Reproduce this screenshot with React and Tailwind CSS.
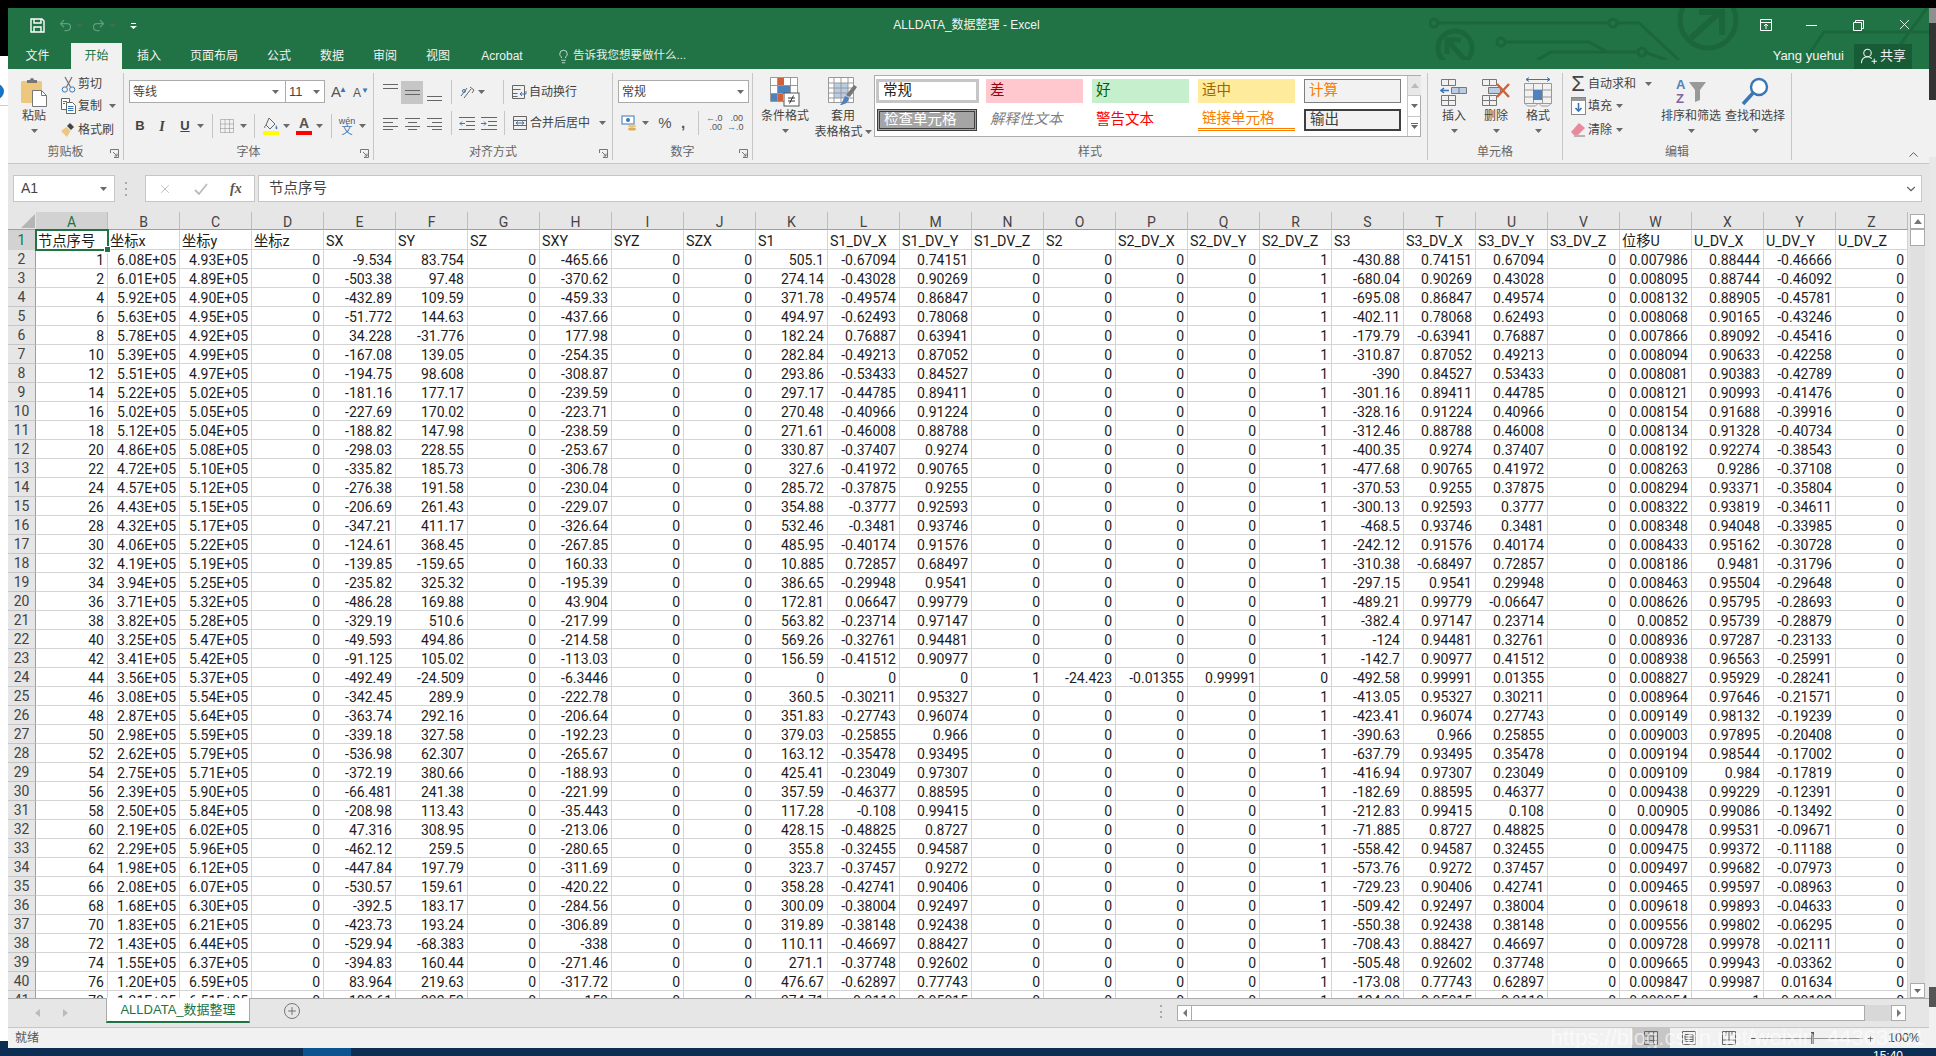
import { Undo2, Redo2, Lightbulb, ChevronUp, ChevronDown, UserRoundPlus, X, Plus } from 'lucide-react'

const raw = `1 6.08E+05 4.93E+05 -9.534 83.754 -465.66 505.1 -0.67094 0.74151 -430.88 0.74151 0.67094 0.007986 0.88444 -0.46666
2 6.01E+05 4.89E+05 -503.38 97.48 -370.62 274.14 -0.43028 0.90269 -680.04 0.90269 0.43028 0.008095 0.88744 -0.46092
4 5.92E+05 4.90E+05 -432.89 109.59 -459.33 371.78 -0.49574 0.86847 -695.08 0.86847 0.49574 0.008132 0.88905 -0.45781
6 5.63E+05 4.95E+05 -51.772 144.63 -437.66 494.97 -0.62493 0.78068 -402.11 0.78068 0.62493 0.008068 0.90165 -0.43246
8 5.78E+05 4.92E+05 34.228 -31.776 177.98 182.24 0.76887 0.63941 -179.79 -0.63941 0.76887 0.007866 0.89092 -0.45416
10 5.39E+05 4.99E+05 -167.08 139.05 -254.35 282.84 -0.49213 0.87052 -310.87 0.87052 0.49213 0.008094 0.90633 -0.42258
12 5.51E+05 4.97E+05 -194.75 98.608 -308.87 293.86 -0.53433 0.84527 -390 0.84527 0.53433 0.008081 0.90383 -0.42789
14 5.22E+05 5.02E+05 -181.16 177.17 -239.59 297.17 -0.44785 0.89411 -301.16 0.89411 0.44785 0.008121 0.90993 -0.41476
16 5.02E+05 5.05E+05 -227.69 170.02 -223.71 270.48 -0.40966 0.91224 -328.16 0.91224 0.40966 0.008154 0.91688 -0.39916
18 5.12E+05 5.04E+05 -188.82 147.98 -238.59 271.61 -0.46008 0.88788 -312.46 0.88788 0.46008 0.008134 0.91328 -0.40734
20 4.86E+05 5.08E+05 -298.03 228.55 -253.67 330.87 -0.37407 0.9274 -400.35 0.9274 0.37407 0.008192 0.92274 -0.38543
22 4.72E+05 5.10E+05 -335.82 185.73 -306.78 327.6 -0.41972 0.90765 -477.68 0.90765 0.41972 0.008263 0.9286 -0.37108
24 4.57E+05 5.12E+05 -276.38 191.58 -230.04 285.72 -0.37875 0.9255 -370.53 0.9255 0.37875 0.008294 0.93371 -0.35804
26 4.43E+05 5.15E+05 -206.69 261.43 -229.07 354.88 -0.3777 0.92593 -300.13 0.92593 0.3777 0.008322 0.93819 -0.34611
28 4.32E+05 5.17E+05 -347.21 411.17 -326.64 532.46 -0.3481 0.93746 -468.5 0.93746 0.3481 0.008348 0.94048 -0.33985
30 4.06E+05 5.22E+05 -124.61 368.45 -267.85 485.95 -0.40174 0.91576 -242.12 0.91576 0.40174 0.008433 0.95162 -0.30728
32 4.19E+05 5.19E+05 -139.85 -159.65 160.33 10.885 0.72857 0.68497 -310.38 -0.68497 0.72857 0.008186 0.9481 -0.31796
34 3.94E+05 5.25E+05 -235.82 325.32 -195.39 386.65 -0.29948 0.9541 -297.15 0.9541 0.29948 0.008463 0.95504 -0.29648
36 3.71E+05 5.32E+05 -486.28 169.88 43.904 172.81 0.06647 0.99779 -489.21 0.99779 -0.06647 0.008626 0.95795 -0.28693
38 3.82E+05 5.28E+05 -329.19 510.6 -217.99 563.82 -0.23714 0.97147 -382.4 0.97147 0.23714 0.00852 0.95739 -0.28879
40 3.25E+05 5.47E+05 -49.593 494.86 -214.58 569.26 -0.32761 0.94481 -124 0.94481 0.32761 0.008936 0.97287 -0.23133
42 3.41E+05 5.42E+05 -91.125 105.02 -113.03 156.59 -0.41512 0.90977 -142.7 0.90977 0.41512 0.008938 0.96563 -0.25991
44 3.56E+05 5.37E+05 -492.49 -24.509 -6.3446 0 0 0 -492.58 0.99991 0.01355 0.008827 0.95929 -0.28241
46 3.08E+05 5.54E+05 -342.45 289.9 -222.78 360.5 -0.30211 0.95327 -413.05 0.95327 0.30211 0.008964 0.97646 -0.21571
48 2.87E+05 5.64E+05 -363.74 292.16 -206.64 351.83 -0.27743 0.96074 -423.41 0.96074 0.27743 0.009149 0.98132 -0.19239
50 2.98E+05 5.59E+05 -339.18 327.58 -192.23 379.03 -0.25855 0.966 -390.63 0.966 0.25855 0.009003 0.97895 -0.20408
52 2.62E+05 5.79E+05 -536.98 62.307 -265.67 163.12 -0.35478 0.93495 -637.79 0.93495 0.35478 0.009194 0.98544 -0.17002
54 2.75E+05 5.71E+05 -372.19 380.66 -188.93 425.41 -0.23049 0.97307 -416.94 0.97307 0.23049 0.009109 0.984 -0.17819
56 2.39E+05 5.90E+05 -66.481 241.38 -221.99 357.59 -0.46377 0.88595 -182.69 0.88595 0.46377 0.009438 0.99229 -0.12391
58 2.50E+05 5.84E+05 -208.98 113.43 -35.443 117.28 -0.108 0.99415 -212.83 0.99415 0.108 0.00905 0.99086 -0.13492
60 2.19E+05 6.02E+05 47.316 308.95 -213.06 428.15 -0.48825 0.8727 -71.885 0.8727 0.48825 0.009478 0.99531 -0.09671
62 2.29E+05 5.96E+05 -462.12 259.5 -280.65 355.8 -0.32455 0.94587 -558.42 0.94587 0.32455 0.009475 0.99372 -0.11188
64 1.98E+05 6.12E+05 -447.84 197.79 -311.69 323.7 -0.37457 0.9272 -573.76 0.9272 0.37457 0.009497 0.99682 -0.07973
66 2.08E+05 6.07E+05 -530.57 159.61 -420.22 358.28 -0.42741 0.90406 -729.23 0.90406 0.42741 0.009465 0.99597 -0.08963
68 1.68E+05 6.30E+05 -392.5 183.17 -284.56 300.09 -0.38004 0.92497 -509.42 0.92497 0.38004 0.009618 0.99893 -0.04633
70 1.83E+05 6.21E+05 -423.73 193.24 -306.89 319.89 -0.38148 0.92438 -550.38 0.92438 0.38148 0.009556 0.99802 -0.06295
72 1.43E+05 6.44E+05 -529.94 -68.383 -338 110.11 -0.46697 0.88427 -708.43 0.88427 0.46697 0.009728 0.99978 -0.02111
74 1.55E+05 6.37E+05 -394.83 160.44 -271.46 271.1 -0.37748 0.92602 -505.48 0.92602 0.37748 0.009665 0.99943 -0.03362
76 1.20E+05 6.59E+05 83.964 219.63 -317.72 476.67 -0.62897 0.77743 -173.08 0.77743 0.62897 0.009847 0.99987 0.01634
78 1.31E+05 6.51E+05 -102.61 332.53 -150 374.71 -0.3118 0.95015 -124.38 0.95015 0.3118 0.009854 1 0.00192`

const rows = raw.split('\n').map((line, i) => {
  const [a, b, c, e, f, h, k, l, m, s, t, u, w, x, y] = line.split(' ')
  const row = [a, b, c, '0', e, f, '0', h, '0', '0', k, l, m, '0', '0', '0', '0', '1', s, t, u, '0', w, x, y, '0']
  // row 24 is the odd one, S1 is empty and S2 carries the values
  if (i === 22) row.splice(13, 5, '1', '-24.423', '-0.01355', '0.99991', '0')
  return row
})

const letters = 'ABCDEFGHIJKLMNOPQRSTUVWXYZ'.split('')
const heads = ['节点序号', '坐标x', '坐标y', '坐标z', 'SX', 'SY', 'SZ', 'SXY', 'SYZ', 'SZX', 'S1', 'S1_DV_X', 'S1_DV_Y', 'S1_DV_Z', 'S2', 'S2_DV_X', 'S2_DV_Y', 'S2_DV_Z', 'S3', 'S3_DV_X', 'S3_DV_Y', 'S3_DV_Z', '位移U', 'U_DV_X', 'U_DV_Y', 'U_DV_Z']

const Caret = ({ className = '' }) => (
  <svg width="7" height="4" viewBox="0 0 7 4" className={`shrink-0 ${className}`}><path d="M0 0h7L3.5 4z" fill="#6a6a6a" /></svg>
)

const Launcher = () => (
  <svg width="9" height="9" viewBox="0 0 9 9" className="absolute right-[4px] bottom-[2px]" fill="none" stroke="#777">
    <path d="M.5 4V.5H8.5V8.5H4M3 3l4 4M7 4.5V7H4.5" />
  </svg>
)

const Lines = ({ rows: r }) => (
  <svg width="15" height="15" viewBox="0 0 15 15" stroke="#666" className="shrink-0">
    {r.map(([y, x1, x2]) => <path key={y} d={`M${x1} ${y}.5H${x2}`} />)}
  </svg>
)

function Group({ className, label, launcher, children }) {
  return (
    <div className={`relative h-[87px] shrink-0 border-r border-[#c6c6c6] ${className}`}>
      <div className="h-[71px]">{children}</div>
      <div className="h-[16px] text-center text-[12px] leading-[16px] text-[#666]">{label}</div>
      {launcher && <Launcher />}
    </div>
  )
}

function BigBtn({ className, icon, label, label2, caret = true }) {
  return (
    <div className={`flex flex-col items-center ${className}`}>
      <div className="mt-[3px] flex h-[31px] items-center justify-center">{icon}</div>
      <div className="mt-[1px] whitespace-nowrap text-[12px] leading-[16px] text-[#444]">{label}</div>
      {label2 ? (
        <div className="flex items-center whitespace-nowrap text-[12px] leading-[16px] text-[#444]">{label2}<Caret className="ml-[2px]" /></div>
      ) : caret && <Caret className="mt-[5px]" />}
    </div>
  )
}

function SmallRow({ className = '', icon, label, caret }) {
  return (
    <div className={`flex h-[22px] items-center ${className}`}>
      <span className="flex w-[18px] justify-center">{icon}</span>
      <span className="ml-[1px] whitespace-nowrap text-[12px] text-[#444]">{label}</span>
      {caret}
    </div>
  )
}

const Sep = ({ className = '' }) => <div className={`h-[24px] w-px shrink-0 bg-[#c6c6c6] ${className}`} />

function StyleCell({ className, children }) {
  return <div className={`flex items-center overflow-hidden whitespace-nowrap px-[4px] text-[14.5px] ${className}`}>{children}</div>
}

const GalleryBtn = ({ className, children }) => (
  <div className={`flex w-[14px] flex-1 flex-col items-center justify-center border-[#c6c6c6] ${className}`}>{children}</div>
)

function TitleBar() {
  return (
    <div className="relative flex h-[35px] items-center text-white">
      <svg width="15" height="15" viewBox="0 0 15 15" fill="none" stroke="#fff" strokeWidth="1.4" className="ml-[22px]">
        <path d="M1 1h11l2 2v11H1zM4 1v4h7V1M4 14V9h7v5" />
      </svg>
      <Undo2 size={15} className="ml-[13px] text-[#5f9d7e]" />
      <Caret className="ml-[3px] opacity-40" />
      <Redo2 size={15} className="ml-[8px] text-[#5f9d7e]" />
      <Caret className="ml-[3px] opacity-40" />
      <svg width="7" height="7" viewBox="0 0 7 7" className="ml-[14px]" fill="#fff"><path d="M1 1h5v1H1zM0 4h7L3.5 7z" /></svg>
      <div className="absolute inset-x-0 top-[8px] pr-[4px] text-center text-[12px] leading-[18px] text-[#f2f2f2]">ALLDATA_数据整理 - Excel</div>
      <div className="absolute right-[16px] top-[8px] flex items-center gap-[30px]">
        <svg width="16" height="16" viewBox="0 0 16 16" fill="none" stroke="#fff"><path d="M2.5 2.5h11v11h-11zM2.5 5.5h11M8 12V7.5M6 9l2-2 2 2" /></svg>
        <svg width="16" height="16" viewBox="0 0 16 16" fill="none" stroke="#fff"><path d="M2 8.5h11" /></svg>
        <svg width="16" height="16" viewBox="0 0 16 16" fill="none" stroke="#fff"><path d="M3.5 5.5h8v8h-8zM5.5 5V3.5h8v8H12" /></svg>
        <X size={17} strokeWidth={1.2} />
      </div>
    </div>
  )
}

function TabRow() {
  const tabs = [['文件', 'w-[63px] pr-[4px]'], ['开始', 'w-[51px]'], ['插入', 'w-[54px]'], ['页面布局', 'w-[76px]'], ['公式', 'w-[54px]'], ['数据', 'w-[52px]'], ['审阅', 'w-[54px]'], ['视图', 'w-[52px]'], ['Acrobat', 'w-[76px]']]
  return (
    <div className="relative flex h-[26px] items-stretch text-[12px] text-[#f2f2f2]">
      {tabs.map(([t, w]) => (
        <div key={t} className={`flex items-center justify-center ${w} ${t === '开始' ? 'bg-[#f1f1f1] text-[#217346]' : ''}`}>{t}</div>
      ))}
      <div className="ml-[16px] flex items-center text-[#e3efe8]">
        <Lightbulb size={15} strokeWidth={1.3} />
        <span className="ml-[2px] text-[11.5px]">告诉我您想要做什么...</span>
      </div>
      <div className="ml-auto mr-[17px] flex items-center">
        <span className="mr-[10px] text-[13px]">Yang yuehui</span>
        <div className="flex h-[25px] w-[58px] items-center justify-center gap-[2px] bg-[#185c37] text-[13px]">
          <UserRoundPlus size={18} strokeWidth={1.4} />共享
        </div>
      </div>
    </div>
  )
}

function Ribbon() {
  return (
    <div className="flex h-[95px] border-b border-[#c6c6c6] bg-[#f1f1f1] pt-[4px]">
      <Group className="w-[116px]" label="剪贴板" launcher>
        <div className="flex">
          <BigBtn className="ml-[6px] w-[40px]" label="粘贴" icon={
            <svg width="28" height="30" viewBox="0 0 28 30">
              <rect x="1" y="4" width="21" height="22" rx="1.5" fill="#eec77f" />
              <path d="M7 6V3h3a2 2 0 0 1 4 0h3v3z" fill="#777" />
              <path d="M12.5 13.5h9l5 5v11h-14z" fill="#fff" stroke="#777" />
              <path d="M21.5 13.5v5h5" fill="none" stroke="#777" />
            </svg>
          } />
          <div className="ml-[5px]">
            <SmallRow label="剪切" icon={
              <svg width="15" height="17" viewBox="0 0 15 17" fill="none">
                <path d="M4 1l5.5 10M11 1L5.5 11" stroke="#777" strokeWidth="1.3" />
                <circle cx="3.8" cy="13.5" r="2.6" stroke="#3a76b5" />
                <circle cx="11.2" cy="13.5" r="2.6" stroke="#3a76b5" />
              </svg>
            } />
            <SmallRow label="复制" caret={<Caret className="ml-[7px]" />} icon={
              <svg width="15" height="16" viewBox="0 0 15 16" fill="#fff" stroke="#666">
                <path d="M.5.5h8v11h-8z" /><path d="M5.5 4.5h6l3 3v8h-9z" />
                <path d="M7 8.5h5.5M7 10.5h5.5M7 12.5h5.5M2 3.5h4M2 5.5h2" fill="none" stroke="#3a76b5" />
              </svg>
            } />
            <SmallRow className="mt-[2px]" label="格式刷" icon={
              <svg width="17" height="16" viewBox="0 0 17 16">
                <path d="M10 1l4 4-3 3-4-4z" fill="#444" />
                <path d="M6.5 5l4 4-3.5 6L1 9z" fill="#eec77f" />
              </svg>
            } />
          </div>
        </div>
      </Group>

      <Group className="w-[250px]" label="字体" launcher>
        <div className="ml-[5px] flex pt-[7px]">
          <div className="flex h-[23px] w-[157px] items-center justify-between border border-[#ababab] bg-white pl-[3px] pr-[6px] text-[12px] text-[#444]">等线<Caret /></div>
          <div className="-ml-px flex h-[23px] w-[40px] items-center justify-between border border-[#ababab] bg-white pl-[3px] pr-[4px] text-[13px] text-[#444]">11<Caret /></div>
          <div className="relative ml-[6px] w-[16px] text-[15px] leading-[23px] text-[#555]">A<span className="absolute right-0 top-[-2px] text-[8px] text-[#3a76b5]">▲</span></div>
          <div className="relative ml-[6px] w-[16px] text-[12px] leading-[26px] text-[#555]">A<span className="absolute right-0 top-[-2px] text-[8px] text-[#3a76b5]">▼</span></div>
        </div>
        <div className="mt-[8px] flex h-[24px] items-center text-[#444]">
          <span className="ml-[11px] w-[10px] text-center text-[13px] font-bold">B</span>
          <span className="ml-[12px] w-[10px] text-center font-['Liberation_Serif'] text-[14px] font-bold italic">I</span>
          <span className="ml-[13px] w-[10px] text-center text-[13px] font-bold underline">U</span>
          <Caret className="ml-[7px]" />
          <Sep className="ml-[8px]" />
          <svg width="14" height="14" viewBox="0 0 14 14" fill="none" stroke="#888" strokeDasharray="1 1" className="ml-[7px]"><path d="M.5.5h13v13H.5zM.5 5h13M.5 9.5h13M5 .5v13M9.5.5v13" /></svg>
          <Caret className="ml-[6px]" />
          <Sep className="ml-[7px]" />
          <svg width="16" height="18" viewBox="0 0 16 18" className="ml-[8px]">
            <path d="M6 1l6 6-5 5-4-4zM3 8c-1 1-2 2-1 3" fill="none" stroke="#666" />
            <path d="M13 8c1 2 2 3 1 4s-2-1-1-4z" fill="#3a76b5" />
            <rect y="14" width="16" height="4" fill="#ffff00" />
          </svg>
          <Caret className="ml-[4px]" />
          <span className="relative ml-[6px] h-[20px] w-[16px] text-center text-[14px] font-semibold leading-[15px] text-[#555]">A<span className="absolute inset-x-0 bottom-[1px] h-[4px] bg-[#ff0000]" /></span>
          <Caret className="ml-[4px]" />
          <Sep className="ml-[8px]" />
          <span className="ml-[7px] flex w-[16px] flex-col items-center text-[9px] leading-[9px] text-[#555]">wén<span className="text-[11px] text-[#3a76b5]">文</span></span>
          <Caret className="ml-[4px]" />
        </div>
      </Group>

      <Group className="w-[239px]" label="对齐方式" launcher>
        <div className="flex items-center pt-[7px]">
          <span className="ml-[9px] h-[23px] pt-[2px]"><Lines rows={[[1, 0, 15], [5, 0, 15]]} /></span>
          <span className="ml-[3px] flex h-[23px] w-[22px] items-center justify-center bg-[#c6c6c6]"><Lines rows={[[5, 0, 15], [9, 0, 15]]} /></span>
          <span className="ml-[4px] h-[23px] pt-[6px]"><Lines rows={[[9, 0, 15], [13, 0, 15]]} /></span>
          <Sep className="ml-[9px]" />
          <svg width="17" height="17" viewBox="0 0 17 17" fill="none" stroke="#666" className="ml-[7px]"><path d="M2 12L8 4M5 14l7-9M11 3l4 3-2 3" /><circle cx="5" cy="7" r="1.5" stroke="#3a76b5" /></svg>
          <Caret className="ml-[2px]" />
          <Sep className="ml-[18px]" />
          <SmallRow className="ml-[6px]" label="自动换行" icon={
            <svg width="16" height="16" viewBox="0 0 16 16" fill="none" stroke="#666"><path d="M1.5 1.5h12v13h-12zM1.5 5.5h8M1.5 9.5h5M1.5 12.5h5" /><path d="M15 7v3H9M11 8l-2 2 2 2" stroke="#3a76b5" /></svg>
          } />
        </div>
        <div className="mt-[7px] flex h-[24px] items-center">
          <span className="ml-[9px]"><Lines rows={[[2, 0, 15], [6, 0, 10], [10, 0, 15], [13, 0, 10]]} /></span>
          <span className="ml-[7px]"><Lines rows={[[2, 0, 15], [6, 3, 12], [10, 0, 15], [13, 3, 12]]} /></span>
          <span className="ml-[7px]"><Lines rows={[[2, 0, 15], [6, 5, 15], [10, 0, 15], [13, 5, 15]]} /></span>
          <Sep className="ml-[9px]" />
          <svg width="16" height="15" viewBox="0 0 16 15" fill="none" stroke="#666" className="ml-[7px]"><path d="M0 1.5h16M7 5.5h9M7 9.5h9M0 13.5h16" /><path d="M6 7.5H1M3 5.5l-2 2 2 2" stroke="#3a76b5" /></svg>
          <svg width="16" height="15" viewBox="0 0 16 15" fill="none" stroke="#666" className="ml-[6px]"><path d="M0 1.5h16M7 5.5h9M7 9.5h9M0 13.5h16" /><path d="M0 7.5h5M3 5.5l2 2-2 2" stroke="#3a76b5" /></svg>
          <Sep className="ml-[7px]" />
          <SmallRow className="ml-[6px]" label="合并后居中" caret={<Caret className="ml-[9px]" />} icon={
            <svg width="16" height="16" viewBox="0 0 16 16" fill="none" stroke="#666"><path d="M1.5 1.5h13v13h-13zM1.5 5.5h13M1.5 10.5h13" /><path d="M4 8h8M6 6.5L4 8l2 1.5M10 6.5L12 8l-2 1.5" stroke="#3a76b5" /></svg>
          } />
        </div>
      </Group>

      <Group className="w-[140px]" label="数字" launcher>
        <div className="ml-[5px] pt-[7px]">
          <div className="flex h-[23px] w-[131px] items-center justify-between border border-[#ababab] bg-white pl-[3px] pr-[4px] text-[12px] text-[#444]">常规<Caret /></div>
        </div>
        <div className="mt-[8px] flex h-[24px] items-center text-[#555]">
          <svg width="16" height="16" viewBox="0 0 16 16" className="ml-[8px]"><rect x="1" y="1" width="12" height="8" fill="#fff" stroke="#3a76b5" /><circle cx="7" cy="5" r="2" fill="#3a76b5" /><ellipse cx="11" cy="11" rx="4" ry="1.6" fill="#eec77f" /><ellipse cx="11" cy="14" rx="4" ry="1.6" fill="#e0ad55" /></svg>
          <Caret className="ml-[5px]" />
          <span className="ml-[8px] w-[16px] text-center text-[15px]">%</span>
          <span className="ml-[6px] w-[8px] text-center text-[15px] font-bold">,</span>
          <Sep className="ml-[11px]" />
          <span className="ml-[7px] flex w-[16px] flex-col text-[9px] leading-[9px]"><span className="text-right"><span className="text-[#3a76b5]">←</span>.0</span><span className="text-right">.00</span></span>
          <span className="ml-[5px] flex w-[16px] flex-col text-[9px] leading-[9px]"><span className="text-right">.00</span><span className="text-right"><span className="text-[#3a76b5]">→</span>.0</span></span>
        </div>
      </Group>

      <Group className="w-[675px]" label="样式">
        <div className="flex">
          <BigBtn className="ml-[3px] w-[58px]" label="条件格式" icon={
            <svg width="30" height="30" viewBox="0 0 30 30">
              <path d="M.5.5h27v24H.5zM.5 8.5h27M.5 16.5h27M7.5.5v24M20.5.5v24" fill="#fff" stroke="#999" />
              <rect x="8" y="1" width="6" height="7" fill="#d0603a" /><rect x="8" y="9" width="12" height="7" fill="#4f81bd" /><rect x="8" y="17" width="5" height="7" fill="#d0603a" /><rect x="1" y="17" width="6" height="7" fill="#4f81bd" />
              <rect x="14" y="16" width="15" height="13" fill="#fff" stroke="#555" />
              <path d="M18 21h7M18 24h7M23.5 18.5l-4 8" stroke="#333" fill="none" />
            </svg>
          } />
          <BigBtn className="w-[58px]" label="套用" label2="表格格式" icon={
            <svg width="30" height="30" viewBox="0 0 30 30">
              <path d="M.5.5h25v25H.5z" fill="#fff" stroke="#999" />
              <rect x="6" y="6" width="14" height="15" fill="#b9cde5" />
              <path d="M.5 6h25M.5 11h25M.5 16h25M.5 21h25M6 .5v25M13 .5v25M20 .5v25" stroke="#999" fill="none" />
              <path d="M26 8l3 2-7 10-4-2z" fill="#777" />
              <path d="M17 19l4 2c-1 5-5 7-9 7 2-2 3-5 5-9z" fill="#4f81bd" />
            </svg>
          } />
          <div className="ml-[2px] mt-[2px] flex h-[62px] w-[547px] border border-[#ababab] bg-white">
            <div className="grid w-[532px] shrink-0 grid-cols-[repeat(5,100px)] grid-rows-[24px_22px] gap-x-[6px] gap-y-[6px] pl-[2px] pt-[3px]">
              <StyleCell className="-ml-px w-[103px] border-[3px] border-[#c6c6c6] text-[#222]">常规</StyleCell>
              <StyleCell className="ml-[3px] bg-[#ffc7ce] text-[#9c0006]">差</StyleCell>
              <StyleCell className="ml-[3px] bg-[#c6efce] text-[#006100]">好</StyleCell>
              <StyleCell className="ml-[3px] bg-[#ffeb9c] text-[#9c6500]">适中</StyleCell>
              <StyleCell className="ml-[3px] border border-[#7f7f7f] bg-[#f2f2f2] text-[#fa7d00]">计算</StyleCell>
              <StyleCell className="w-[100px] border-[3px] border-double border-[#3f3f3f] bg-[#a5a5a5] px-[2px] text-white">检查单元格</StyleCell>
              <StyleCell className="ml-[3px] italic text-[#7f7f7f]">解释性文本</StyleCell>
              <StyleCell className="ml-[3px] text-[#ff0000]">警告文本</StyleCell>
              <StyleCell className="ml-[3px] border-b-[3px] border-double border-[#fa7d00] text-[#fa7d00]">链接单元格</StyleCell>
              <StyleCell className="ml-[3px] border-2 border-[#3f3f3f] bg-[#f2f2f2] text-[#3f3f3f]">输出</StyleCell>
            </div>
            <div className="flex flex-col">
              <GalleryBtn className="border-b border-l bg-[#e8e8e8]"><svg width="8" height="5" viewBox="0 0 8 5"><path d="M0 5h8L4 0z" fill="#bbb" /></svg></GalleryBtn>
              <GalleryBtn className="border-b border-l"><Caret /></GalleryBtn>
              <GalleryBtn className="border-l"><span className="mb-[1px] h-px w-[7px] bg-[#666]" /><Caret /></GalleryBtn>
            </div>
          </div>
        </div>
      </Group>

      <Group className="w-[135px]" label="单元格">
        <div className="flex pl-[5px]">
          <BigBtn className="w-[42px]" label="插入" icon={
            <svg width="28" height="28" viewBox="0 0 28 28" fill="none" stroke="#777"><path d="M1.5 1.5h14v6h-14zM8.5 1.5v6M1.5 17.5h14v10h-14zM1.5 22.5h14M8.5 17.5v10" /><path d="M11.5 9.5h15v6h-15zM19 9.5v6" fill="#b9cde5" stroke="#777" /><path d="M9 12.5H1M4 10l-3 2.5L4 15" stroke="#3a76b5" strokeWidth="1.5" /></svg>
          } />
          <BigBtn className="w-[42px]" label="删除" icon={
            <svg width="30" height="28" viewBox="0 0 30 28" fill="none" stroke="#777"><path d="M1.5 1.5h14v6h-14zM8.5 1.5v6M1.5 17.5h14v10h-14zM1.5 22.5h14M8.5 17.5v10" /><path d="M7.5 9.5h12v6h-12z" fill="#b9cde5" /><path d="M16 6l12 13M28 6L16 19" stroke="#d0603a" strokeWidth="2.4" /></svg>
          } />
          <BigBtn className="w-[42px]" label="格式" icon={
            <svg width="28" height="30" viewBox="0 0 28 30" fill="none" stroke="#999"><path d="M.5 6.5h27v20H.5zM.5 13h27M.5 20h27M9.5 6.5v20M18.5 6.5v20" /><rect x="9" y="13" width="9" height="10" fill="#4f81bd" stroke="none" /><path d="M2 2.5h24M5 .5l-3 2 3 2M23 .5l3 2-3 2" stroke="#3a76b5" /><path d="M.5 26l3 3h8l3-3 3 3h7l3-3" /></svg>
          } />
        </div>
      </Group>

      <Group className="w-[229px]" label="编辑">
        <div className="flex">
          <div className="ml-[6px] w-[90px]">
            <SmallRow label="自动求和" caret={<Caret className="ml-[9px]" />} icon={<span className="text-[22px] leading-[22px] text-[#444]">Σ</span>} />
            <SmallRow label="填充" caret={<Caret className="ml-[4px]" />} icon={
              <svg width="15" height="18" viewBox="0 0 15 18" fill="none"><rect x=".5" y=".5" width="14" height="17" fill="#fff" stroke="#888" /><rect x="1" y="1" width="13" height="3" fill="#999" /><path d="M7.5 6v8M4.5 11l3 3 3-3" stroke="#3a76b5" strokeWidth="1.6" /></svg>
            } />
            <SmallRow className="mt-[2px]" label="清除" caret={<Caret className="ml-[4px]" />} icon={
              <svg width="16" height="16" viewBox="0 0 16 16"><path d="M9 1l6 5-7 7H4L1 10z" fill="#e78a9e" /><path d="M4 14h11" stroke="#777" /></svg>
            } />
          </div>
          <BigBtn className="ml-[1px] w-[62px]" label="排序和筛选" icon={
            <span className="relative flex h-[28px] w-[30px] flex-col text-[13px] font-bold leading-[14px]">
              <span className="text-[#4f81bd]">A</span>
              <span className="text-[#8064a2]">Z</span>
              <svg width="17" height="20" viewBox="0 0 17 20" className="absolute right-0 top-[4px]"><path d="M0 0h17l-6 8v10l-5 2V8z" fill="#999" /></svg>
            </span>
          } />
          <BigBtn className="ml-[2px] w-[62px]" label="查找和选择" icon={
            <svg width="28" height="30" viewBox="0 0 28 30" fill="none" stroke="#3a76b5"><circle cx="18" cy="10" r="8" strokeWidth="2.4" fill="#fff" /><path d="M12 16L2 27" strokeWidth="3.5" /></svg>
          } />
        </div>
      </Group>

      <div className="relative flex-1">
        <ChevronUp size={15} strokeWidth={1.5} className="absolute bottom-[1px] right-[8px] text-[#555]" />
      </div>
    </div>
  )
}

function FormulaBar() {
  return (
    <div className="flex h-[48px] items-start bg-[#e6e6e6] pt-[11px]">
      <div className="ml-[5px] flex h-[27px] w-[102px] items-center justify-between border border-[#c6c6c6] bg-white pl-[7px] pr-[7px] text-[14px] text-[#444]">A1<Caret /></div>
      <div className="mb-[10px] ml-[10px] flex h-[18px] w-[3px] flex-col justify-around self-center">
        <span className="h-[2px] w-[2px] bg-[#aaa]" /><span className="h-[2px] w-[2px] bg-[#aaa]" /><span className="h-[2px] w-[2px] bg-[#aaa]" />
      </div>
      <div className="ml-[17px] flex h-[27px] w-[110px] items-center border border-[#c6c6c6] bg-white text-[#bbb]">
        <X size={14} strokeWidth={1.6} className="ml-[12px]" />
        <svg width="14" height="14" viewBox="0 0 14 14" fill="none" stroke="#bbb" strokeWidth="1.8" className="ml-[22px]"><path d="M1 8l4 4 8-10" /></svg>
        <span className="ml-[22px] font-['Liberation_Serif'] text-[14px] font-bold italic text-[#555]">fx</span>
      </div>
      <div className="ml-[3px] flex h-[27px] flex-1 items-center justify-between border border-[#c6c6c6] bg-white pl-[10px] pr-[3px] text-[14.5px] text-[#444]">
        节点序号<ChevronDown size={14} strokeWidth={2} className="text-[#666]" />
      </div>
      <div className="w-[7px]" />
    </div>
  )
}

function Sheet() {
  return (
    <div className="flex min-h-0 flex-1 bg-[#e6e6e6]">
      <div className="relative h-full w-[1900px] shrink-0 overflow-hidden bg-white [font-family:Roboto,'Noto_Sans_CJK_SC',sans-serif] text-[14px] text-[#1c1c1c]">
        <div className="grid grid-cols-[28px_repeat(26,72px)] grid-rows-[18px_20px_repeat(40,19px)]">
          <div className="flex items-end justify-end border-b border-[#9e9e9e] bg-[#e6e6e6] pb-px pr-px">
            <svg width="14" height="14" viewBox="0 0 14 14"><path d="M14 0v14H0z" fill="#b5b5b5" /></svg>
          </div>
          {letters.map((c, i) => (
            <div key={c} className={`flex items-center justify-center border-b border-r border-b-[#9e9e9e] border-r-[#bdbdbd] pt-[2px] leading-none ${i === 0 ? 'bg-[#d2d2d2] text-[#217346]' : 'bg-[#e6e6e6] text-[#444]'}`}>{c}</div>
          ))}
          <div className="flex items-center justify-center border-r border-[#9e9e9e] bg-[#d2d2d2] pt-px text-[#217346]">1</div>
          {heads.map((h) => (
            <div key={h} className="overflow-hidden whitespace-nowrap border-b border-r border-[#d4d4d4] pl-[2px] text-[14.3px] leading-[22px]">{h}</div>
          ))}
          {rows.map((row, r) => [
            <div key={`h${r}`} className="flex items-center justify-center border-b border-r border-b-[#c6c6c6] border-r-[#9e9e9e] bg-[#e6e6e6] pt-px text-[#444]">{r + 2}</div>,
            ...row.map((v, c) => (
              <div key={`${r}-${c}`} className="overflow-hidden whitespace-nowrap border-b border-r border-[#d4d4d4] pr-[3px] text-right leading-[20px]">{v}</div>
            )),
          ])}
        </div>
        {/* active cell A1 */}
        <div className="absolute left-[27px] top-[17px] h-[22px] w-[74px] border-2 border-[#217346]">
          <span className="absolute -bottom-[4px] -right-[4px] h-[7px] w-[7px] border border-white bg-[#217346]" />
        </div>
      </div>
      <div className="w-[2px]" />
      <div className="flex w-[15px] flex-col pb-0 pt-[2px]">
        <div className="flex h-[15px] items-center justify-center border border-[#ababab] bg-white">
          <svg width="8" height="5" viewBox="0 0 8 5"><path d="M0 5h8L4 0z" fill="#777" /></svg>
        </div>
        <div className="h-[17px] border border-[#ababab] bg-white" />
        <div className="flex-1 bg-[#e0e0e0]" />
        <div className="flex h-[15px] items-center justify-center border border-[#ababab] bg-white"><Caret /></div>
      </div>
    </div>
  )
}

function SheetTabs() {
  return (
    <div className="flex h-[29px] items-start border-t border-[#ababab] bg-[#e6e6e6]">
      <svg width="5" height="8" viewBox="0 0 5 8" className="ml-[27px] mt-[10px]"><path d="M5 0v8L0 4z" fill="#bbb" /></svg>
      <svg width="5" height="8" viewBox="0 0 5 8" className="ml-[23px] mt-[10px]"><path d="M0 0v8l5-4z" fill="#bbb" /></svg>
      <div className="-mt-px ml-[38px] flex h-[25px] w-[144px] items-center justify-center border-x border-b-[2px] border-x-[#ababab] border-b-[#217346] bg-white text-[13px] text-[#217346]">ALLDATA_数据整理</div>
      <div className="ml-[34px] mt-[4px] flex h-[16px] w-[16px] items-center justify-center rounded-full border border-[#777] text-[#666]"><Plus size={12} strokeWidth={1.8} /></div>
      <div className="ml-[860px] mt-[6px] flex h-[13px] flex-col justify-between">
        <span className="h-[2px] w-[2px] bg-[#aaa]" /><span className="h-[2px] w-[2px] bg-[#aaa]" /><span className="h-[2px] w-[2px] bg-[#aaa]" />
      </div>
      <div className="ml-[15px] mt-[6px] flex h-[16px] w-[729px]">
        <div className="flex w-[15px] items-center justify-center border border-[#ababab] bg-white"><svg width="4" height="8" viewBox="0 0 4 8"><path d="M4 0v8L0 4z" fill="#777" /></svg></div>
        <div className="w-[673px] border-y border-r border-[#ababab] bg-white" />
        <div className="flex-1 bg-[#d8d8d8]" />
        <div className="flex w-[15px] items-center justify-center border border-[#ababab] bg-white"><svg width="4" height="8" viewBox="0 0 4 8"><path d="M0 0v8l4-4z" fill="#777" /></svg></div>
      </div>
    </div>
  )
}

function StatusBar() {
  return (
    <div className="relative flex h-[21px] items-stretch border-t border-[#c6c6c6] bg-[#f1f1f1] text-[12px] text-[#555]">
      <div className="ml-[7px] flex items-center">就绪</div>
      <div className="ml-auto flex items-center">
        <div className="flex h-full w-[38px] items-center justify-center bg-[#c6c6c6]">
          <svg width="14" height="14" viewBox="0 0 14 14" fill="none" stroke="#666"><path d="M.5.5h13v13H.5zM.5 5h13M.5 9.5h13M5 .5v13M9.5.5v13" /></svg>
        </div>
        <svg width="14" height="14" viewBox="0 0 14 14" fill="none" stroke="#666" className="ml-[12px]"><path d="M.5.5h13v13H.5zM3 3.5h8v7H3zM3 6h8M3 8.5h8" /></svg>
        <svg width="14" height="14" viewBox="0 0 14 14" fill="none" stroke="#666" className="ml-[26px]"><path d="M.5.5h13v13H.5zM.5 9h13M7 .5V9M4 .5V5M10 .5V5" /></svg>
        <span className="ml-[15px] h-px w-[5px] bg-[#555]" />
        <div className="relative ml-[3px] h-px w-[104px] bg-[#999]"><span className="absolute left-[52px] top-[-6px] h-[12px] w-[3px] bg-[#555]" /></div>
        <Plus size={9} className="ml-[3px]" />
        <span className="ml-[13px] mr-[9px] text-[12.5px] text-[#444]">100%</span>
      </div>
      {/* csdn watermark */}
      <div className="pointer-events-none absolute bottom-[-3px] right-[4px] whitespace-nowrap text-[22px] leading-[26px] text-white/60">https://blog.csdn.net/weixin_44363051</div>
    </div>
  )
}

export default function App() {
  return (
    <div className="flex h-[1056px] w-[1936px] flex-col overflow-hidden bg-black [font-family:'Liberation_Sans','Noto_Sans_CJK_SC',sans-serif]">
      <div className="h-[8px] shrink-0 bg-black" />
      <div className="flex min-h-0 flex-1">
        <div className="flex w-[8px] shrink-0 flex-col">
          <div className="h-[48px] bg-black" />
          <div className="relative h-[50px] overflow-hidden border-b border-[#ccc] bg-white">
            <span className="absolute left-[-11px] top-[28px] h-[15px] w-[15px] rounded-full bg-[#1673c5]" />
          </div>
          <div className="flex-1 bg-white" />
          <div className="h-[7px] bg-[#0b2e52]" />
        </div>
        <div className="flex w-[1921px] shrink-0 flex-col">
          <div className="relative bg-[#217346]">
            <svg width="500" height="52" viewBox="0 0 500 52" fill="none" stroke="#1c663c" strokeWidth="3" className="absolute right-0 top-0">
              <circle cx="5" cy="15" r="4" /><path d="M9 15H180M188 15H210L250 52" /><circle cx="184" cy="15" r="4" />
              <circle cx="26" cy="40" r="17" strokeWidth="5" /><path d="M36 52L18 32M18 46V32H32" strokeWidth="5" />
              <circle cx="72" cy="34" r="4" /><path d="M76 34H160L178 44H210M215 44L238 52M108 52l14-8H210" /><circle cx="213" cy="44" r="4" />
              <circle cx="279" cy="12" r="28" strokeWidth="5" /><path d="M262 30L292 3M270 4H293V27" strokeWidth="6" />
              <path d="M376 52L395 24H500M460 52L498 0" />
            </svg>
            <TitleBar />
            <TabRow />
          </div>
          <Ribbon />
          <FormulaBar />
          <Sheet />
          <SheetTabs />
          <StatusBar />
        </div>
        <div className="flex flex-1 flex-col bg-[#e8e8e8]">
          <div className="h-[15px] bg-[#8f8f8f]" />
          <div className="h-[77px] bg-[#333]" />
          <div className="h-[57px] bg-[#f1f1f1]" />
          <div className="h-[830px] bg-[#e8e8e8]" />
          <div className="h-[20px] bg-[#555]" />
          <div className="flex-1 bg-[#f1f1f1]" />
        </div>
      </div>
      <div className="relative h-[8px] shrink-0 bg-[#0b2e52]">
        <span className="absolute left-[303px] top-0 block h-[8px] w-[48px] bg-[#0d5390]" />
        <span className="absolute left-[1873px] top-[1px] text-[12px] leading-[14px] text-white">15:40</span>
      </div>
    </div>
  )
}
